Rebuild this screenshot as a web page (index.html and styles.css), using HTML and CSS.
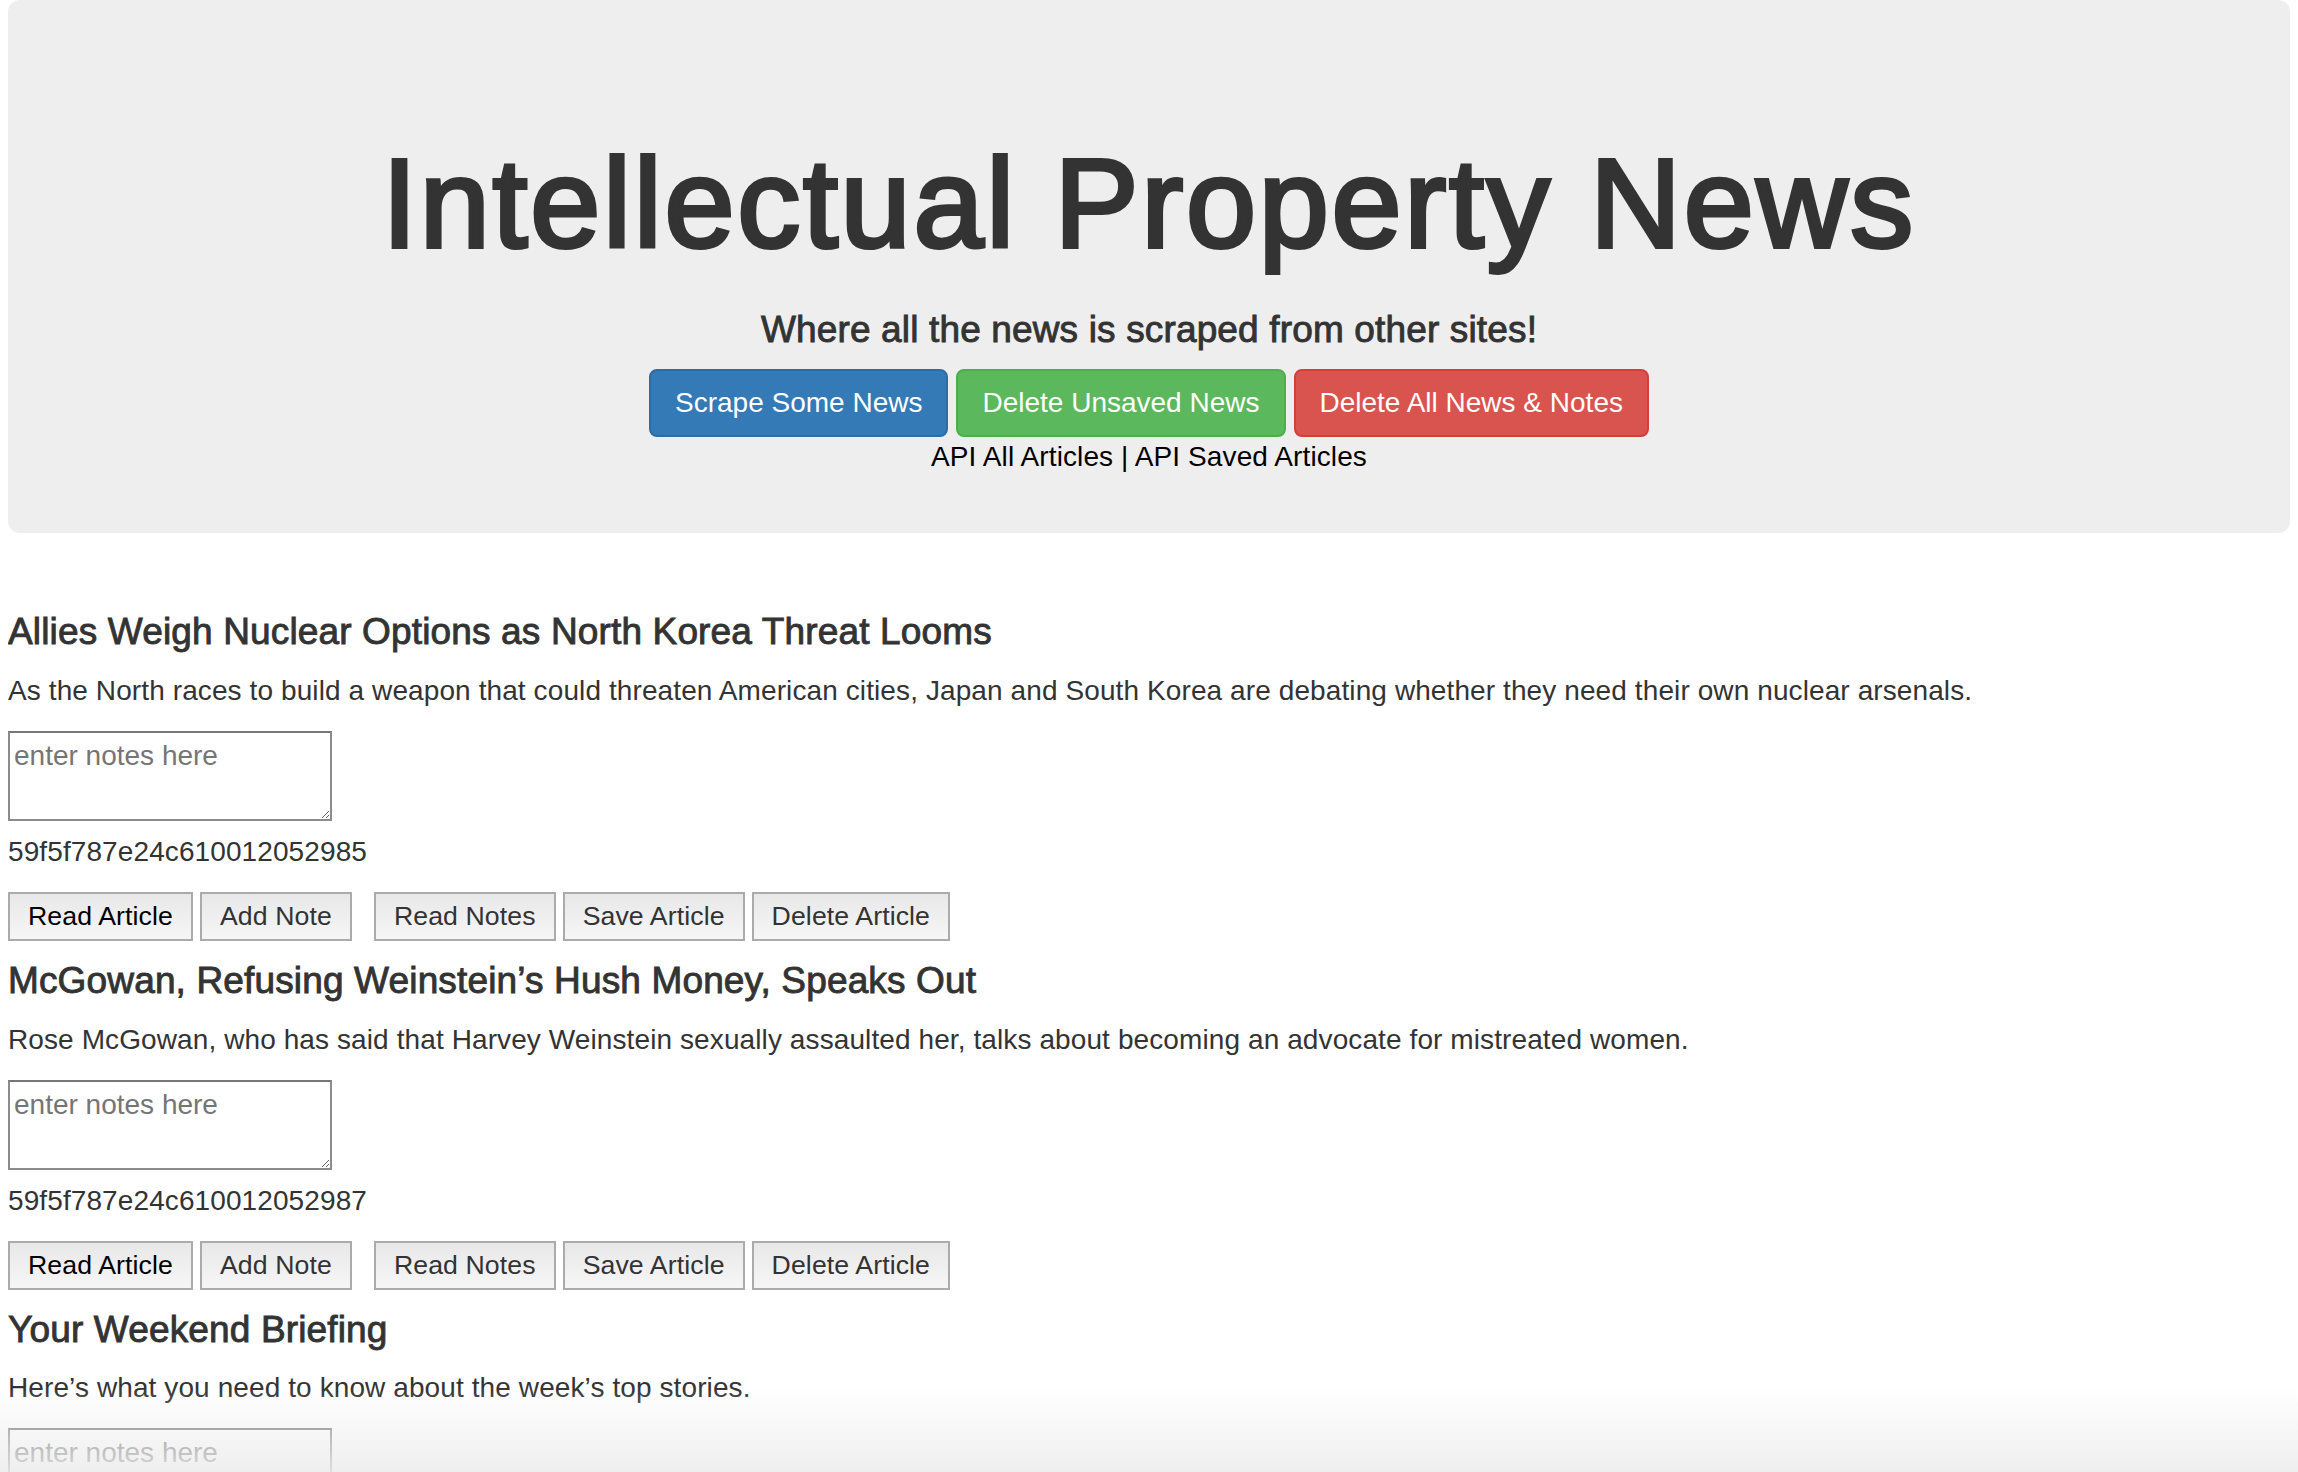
FILE: index.html
```html
<!DOCTYPE html>
<html lang="en">
<head>
<meta charset="utf-8">
<title>Intellectual Property News</title>
<link rel="stylesheet" href="styles.css">
</head>
<body>
<div class="jumbotron">
  <h1 class="site-title">Intellectual Property News</h1>
  <h4 class="tagline">Where all the news is scraped from other sites!</h4>
  <div class="actions">
    <button class="btn btn-primary">Scrape Some News</button>
    <button class="btn btn-success">Delete Unsaved News</button>
    <button class="btn btn-danger">Delete All News &amp; Notes</button>
  </div>
  <div class="api-links"><a href="#">API All Articles</a> | <a href="#">API Saved Articles</a></div>
</div>

<div class="articles">
  <div class="article">
    <h4 class="article-title">Allies Weigh Nuclear Options as North Korea Threat Looms</h4>
    <p class="article-desc">As the North races to build a weapon that could threaten American cities, Japan and South Korea are debating whether they need their own nuclear arsenals.</p>
    <textarea class="note" placeholder="enter notes here"></textarea>
    <p class="article-id">59f5f787e24c610012052985</p>
    <div class="article-actions">
      <button class="art-btn art-btn-read">Read Article</button>
      <button class="art-btn art-btn-add">Add Note</button>
      <button class="art-btn">Read Notes</button>
      <button class="art-btn">Save Article</button>
      <button class="art-btn">Delete Article</button>
    </div>
  </div>

  <div class="article">
    <h4 class="article-title">McGowan, Refusing Weinstein’s Hush Money, Speaks Out</h4>
    <p class="article-desc">Rose McGowan, who has said that Harvey Weinstein sexually assaulted her, talks about becoming an advocate for mistreated women.</p>
    <textarea class="note" placeholder="enter notes here"></textarea>
    <p class="article-id">59f5f787e24c610012052987</p>
    <div class="article-actions">
      <button class="art-btn art-btn-read">Read Article</button>
      <button class="art-btn art-btn-add">Add Note</button>
      <button class="art-btn">Read Notes</button>
      <button class="art-btn">Save Article</button>
      <button class="art-btn">Delete Article</button>
    </div>
  </div>

  <div class="article">
    <h4 class="article-title">Your Weekend Briefing</h4>
    <p class="article-desc">Here’s what you need to know about the week’s top stories.</p>
    <textarea class="note" placeholder="enter notes here"></textarea>
    <p class="article-id">59f5f787e24c610012052989</p>
    <div class="article-actions">
      <button class="art-btn art-btn-read">Read Article</button>
      <button class="art-btn art-btn-add">Add Note</button>
      <button class="art-btn">Read Notes</button>
      <button class="art-btn">Save Article</button>
      <button class="art-btn">Delete Article</button>
    </div>
  </div>
</div>

<div class="bottom-fade"></div>
</body>
</html>
```

FILE: styles.css
```css
html {
  overflow: hidden;
}

body {
  margin: 0 8px;
  font-family: "Liberation Sans", Arial, Helvetica, sans-serif;
  font-size: 28px;
  line-height: 40px;
  letter-spacing: 0.1px;
  color: #333;
  background: #fff;
}

.jumbotron {
  background: #eee;
  border-radius: 12px;
  padding: 96px 120px 56px;
  text-align: center;
}

.site-title {
  margin: 39px 0 36px;
  font-size: 126px;
  line-height: 1.1;
  font-weight: normal;
  letter-spacing: 2.7px;
  color: #333;
  -webkit-text-stroke: 4px #333;
}

.tagline {
  margin: 0 0 19px;
  font-size: 37px;
  line-height: 1.1;
  font-weight: normal;
  letter-spacing: 0.15px;
  color: #333;
  -webkit-text-stroke: 0.9px #333;
}

.actions {
  display: flex;
  justify-content: center;
  gap: 8px;
}

.btn {
  font-family: inherit;
  font-size: 28px;
  line-height: 40px;
  letter-spacing: 0;
  padding: 12px 24px;
  border: 2px solid transparent;
  border-radius: 8px;
  color: #fff;
  cursor: pointer;
}

.btn-primary {
  background: #337ab7;
  border-color: #2e6da4;
}

.btn-success {
  background: #5cb85c;
  border-color: #4cae4c;
}

.btn-danger {
  background: #d9534f;
  border-color: #d43f3a;
}

.api-links {
  color: #000;
}

.api-links a {
  color: #000;
  text-decoration: none;
}

.articles {
  padding-top: 60px;
}

.article-title {
  margin: 20px 0 18px;
  font-size: 37px;
  line-height: 1.1;
  font-weight: normal;
  letter-spacing: 0.15px;
  color: #333;
  -webkit-text-stroke: 0.9px #333;
}

.articles .article:first-child .article-title {
  margin-top: 19px;
}

.article-desc {
  margin: 0 0 20px;
}

.note {
  display: block;
  box-sizing: border-box;
  width: 324px;
  height: 90px;
  margin: 0 0 11px;
  padding: 7px 4px 3px;
  border: 2px solid #8c8c8c;
  border-top-color: #777;
  font-family: inherit;
  font-size: 28px;
  color: #333;
  background: #fff;
}

.note::placeholder {
  color: #757575;
}

.article-id {
  margin: 0 0 20px;
}

.article-actions {
  display: flex;
  gap: 7px;
}

.art-btn {
  box-sizing: border-box;
  height: 49px;
  padding: 0 18px;
  font-family: inherit;
  font-size: 26.67px;
  line-height: 33px;
  letter-spacing: 0.1px;
  color: #333;
  border: 2px solid #ababab;
  border-radius: 0;
  background: linear-gradient(#e8e8e8, #f6f6f6);
}

.art-btn-read {
  color: #000;
}

.art-btn-add {
  margin-right: 15px;
}

.bottom-fade {
  position: fixed;
  left: 0;
  right: 0;
  bottom: 0;
  height: 85px;
  pointer-events: none;
  background: linear-gradient(rgba(236, 236, 236, 0), rgba(236, 236, 236, 0.85));
}
```
